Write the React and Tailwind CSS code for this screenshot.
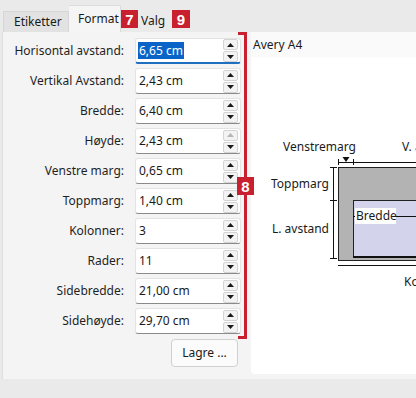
import React from "react";

const rows = [
  ["Horisontal avstand:", "6,65 cm"],
  ["Vertikal Avstand:", "2,43 cm"],
  ["Bredde:", "6,40 cm"],
  ["Høyde:", "2,43 cm"],
  ["Venstre marg:", "0,65 cm"],
  ["Toppmarg:", "1,40 cm"],
  ["Kolonner:", "3"],
  ["Rader:", "11"],
  ["Sidebredde:", "21,00 cm"],
  ["Sidehøyde:", "29,70 cm"],
];

const font = { fontFamily: '"Noto Sans", "Open Sans", sans-serif' };

function Arrow({ up, disabled }) {
  return (
    <svg width="7" height="4" viewBox="0 0 7 4">
      <polygon
        points={up ? "0,4 7,4 3.5,0" : "0,0 7,0 3.5,4"}
        fill={disabled ? "#b5b5b5" : "#1a1a1a"}
      />
    </svg>
  );
}

function Spinner({ upDisabled }) {
  return (
    <div className="flex flex-col gap-[1px] mr-[2px]">
      <div className="w-[15px] h-[11px] flex items-center justify-center bg-[#f3f3f3] border border-[#d4d4d4] rounded-[2px]">
        <Arrow up disabled={upDisabled} />
      </div>
      <div className="w-[15px] h-[11px] flex items-center justify-center bg-[#f3f3f3] border border-[#d4d4d4] rounded-[2px]">
        <Arrow />
      </div>
    </div>
  );
}

function Row({ label, value, i }) {
  const focused = i === 0;
  return (
    <div className="h-[30px] flex items-center">
      <div className="w-[121px] text-right text-[12px] text-[#1f1f1f]">{label}</div>
      <div
        className={
          "ml-[11px] w-[106px] h-[26px] flex items-center justify-between bg-white border border-[#e3e3e3] rounded-[3px] " +
          (focused ? "border-b-2 border-b-[#1f6fc0]" : "border-b-[#8a8a8a]")
        }
      >
        <span className="pl-[2px] text-[12px] text-[#1a1a1a] leading-[18px]">
          {focused ? (
            <span className="bg-[#0a64c8] text-white px-[1px]">{value}</span>
          ) : (
            <span className="px-[1px]">{value}</span>
          )}
        </span>
        <Spinner upDisabled={i === 3} />
      </div>
    </div>
  );
}

function Badge({ n, className }) {
  return (
    <div
      className={
        "absolute flex items-center justify-center bg-[#c8202f] text-white font-bold text-[15px] leading-none " +
        className
      }
      style={{ fontFamily: '"Liberation Sans", Arial, sans-serif' }}
    >
      {n}
    </div>
  );
}

function Diagram() {
  const t = { fontFamily: '"Noto Sans", "Open Sans", sans-serif', fontSize: 12, fill: "#1a1a1a" };
  const ox = 251, oy = 32;
  const X = (x) => x - ox;
  const Y = (y) => y - oy;
  return (
    <svg className="absolute left-0 top-0" width="165" height="341" viewBox="0 0 165 341">
      <text x={X(283)} y={Y(151)} style={t}>Venstremarg</text>
      <text x={X(402)} y={Y(151)} style={t}>V. avstand</text>
      <line x1={X(338)} y1={Y(162.5)} x2={X(420)} y2={Y(162.5)} stroke="#111" strokeWidth="1" />
      <line x1={X(338.5)} y1={Y(159)} x2={X(338.5)} y2={Y(165)} stroke="#111" strokeWidth="1" />
      <line x1={X(353.5)} y1={Y(159)} x2={X(353.5)} y2={Y(165)} stroke="#111" strokeWidth="1" />
      <polygon points={`${X(342.5)},${Y(157)} ${X(349.5)},${Y(157)} ${X(346)},${Y(162)}`} fill="#111" />
      <rect x={X(338.5)} y={Y(167.5)} width="90" height="93" fill="#b3b3b3" stroke="#222" strokeWidth="1" />
      <rect x={X(353.5)} y={Y(200.5)} width="80" height="57" fill="#d3d3ec" stroke="#222" strokeWidth="1" />
      <line x1={X(353)} y1={Y(257)} x2={X(420)} y2={Y(257)} stroke="#111" strokeWidth="2" />
      <line x1={X(396)} y1={Y(216.5)} x2={X(420)} y2={Y(216.5)} stroke="#111" strokeWidth="1" />
      <line x1={X(353)} y1={Y(216.5)} x2={X(356)} y2={Y(216.5)} stroke="#111" strokeWidth="1" />
      <rect x={X(355)} y={Y(208)} width="41" height="16" fill="#fff" />
      <text x={X(356)} y={Y(220)} style={t}>Bredde</text>
      <line x1={X(333.5)} y1={Y(167)} x2={X(333.5)} y2={Y(259)} stroke="#111" strokeWidth="1" />
      <line x1={X(330)} y1={Y(167.5)} x2={X(337)} y2={Y(167.5)} stroke="#111" strokeWidth="1" />
      <line x1={X(330)} y1={Y(200.5)} x2={X(337)} y2={Y(200.5)} stroke="#111" strokeWidth="1" />
      <line x1={X(330)} y1={Y(258.5)} x2={X(337)} y2={Y(258.5)} stroke="#111" strokeWidth="1" />
      <text x={X(329)} y={Y(188)} textAnchor="end" style={t}>Toppmarg</text>
      <text x={X(329)} y={Y(233)} textAnchor="end" style={t}>L. avstand</text>
      <line x1={X(338)} y1={Y(265.5)} x2={X(420)} y2={Y(265.5)} stroke="#111" strokeWidth="1" />
      <text x={X(404)} y={Y(286)} style={t}>Kolonner</text>
    </svg>
  );
}

export default function App() {
  return (
    <div className="w-[416px] h-[398px] bg-[#eaeaea] relative overflow-hidden" style={font}>
      {/* tab strip */}
      <div className="h-[32px] flex items-end pl-[3px] text-[12px] text-[#1a1a1a]">
        <div className="h-[21px] w-[66px] pl-[10px] flex items-center bg-[#e2e2e2] border border-b-0 border-[#d6d6d6] whitespace-nowrap">
          Etiketter
        </div>
        <div className="h-[27px] w-[52px] pl-[9px] flex items-center bg-[#f5f5f5] border-t border-r border-[#dcdcdc] whitespace-nowrap">
          Format
        </div>
        <div className="h-[22px] pl-[20px] flex items-center">Valg</div>
      </div>
      <Badge n="7" className="left-[121px] top-[10px] w-[17px] h-[18px]" />
      <Badge n="9" className="left-[172px] top-[10px] w-[18px] h-[18px]" />

      {/* body */}
      <div className="h-[347px] flex bg-[#f4f4f4] ml-[2px] border-l border-[#dedede]">
        <div className="w-[248px] flex flex-col pt-[4px]">
          <div>
            {rows.map(([l, v], i) => (
              <Row key={l} label={l} value={v} i={i} />
            ))}
          </div>
          <div className="flex justify-end pr-[13px] mt-[3px]">
            <div className="w-[67px] h-[28px] flex items-center justify-center bg-[#fbfbfb] border border-[#d0d0d0] rounded-[4px] text-[12px] text-[#1a1a1a]">
              Lagre ...
            </div>
          </div>
        </div>
        <div className="flex-1 pb-[5px]">
          <div className="h-full bg-white rounded-bl-[4px] relative">
            <div className="h-[25px] bg-[#fafafa] pl-[2px] flex items-center text-[12px] text-[#1a1a1a]">
              Avery A4
            </div>
            <Diagram />
          </div>
        </div>
      </div>

      {/* red bracket annotation */}
      <div className="absolute left-[238px] top-[32px] w-[9px] h-[307px] border-t-[3px] border-r-[3px] border-b-[3px] border-[#c8202f]" />
      <Badge n="8" className="left-[237px] top-[177px] w-[17px] h-[18px]" />
    </div>
  );
}
